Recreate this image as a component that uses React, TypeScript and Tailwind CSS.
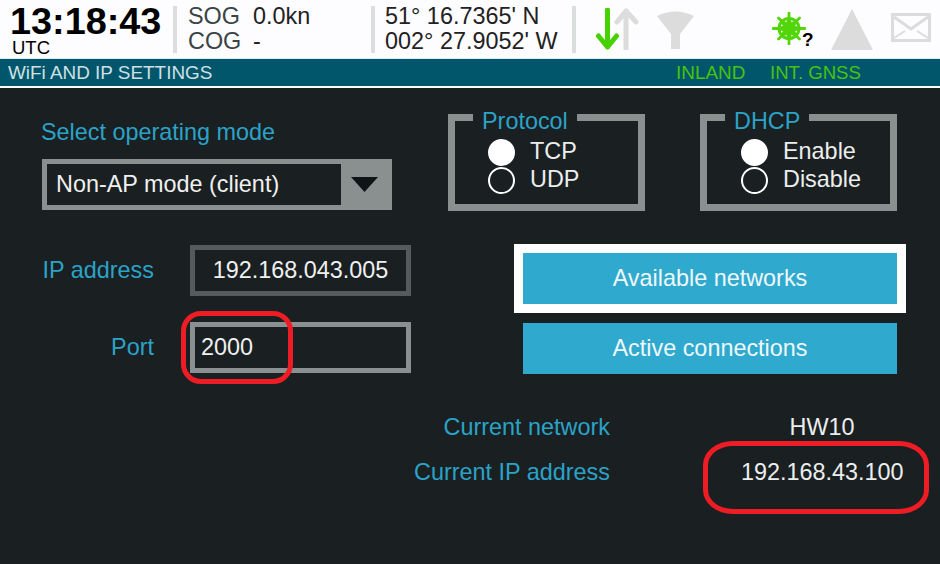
import React from 'react';

const Divider = () => <div className="h-[47px] w-[4px] shrink-0 bg-[#dcdedd]" />;

const ShipWheel = () => (
  <svg width="34" height="33" viewBox="0 0 34 33" fill="none" stroke="#52d60a" strokeLinecap="round">
    <circle cx="17" cy="16.5" r="10" strokeWidth="3" />
    <path d="M17 1v31M1 16.5h32M6.5 6l21 21M27.5 6l-21 21" strokeWidth="2.8" />
    <path d="M17 10v13M10.5 16.5h13M12.5 12l9 9M21.5 12l-9 9" strokeWidth="5" />
  </svg>
);

const StatusIcons = () => (
  <div className="flex items-start self-start">
    <svg width="43" height="42" viewBox="0 0 43 42" fill="none" strokeLinecap="round" strokeLinejoin="round" className="mt-[8px] ml-[20px]">
      <path d="M30 42V3M21 14L30 3L40 14" stroke="#dcdcdc" strokeWidth="5" />
      <path d="M11.5 2v37M2.5 28l9 11l9-11" stroke="#46d200" strokeWidth="5" />
    </svg>
    <svg width="37" height="39" viewBox="0 0 37 39" className="mt-[10px] ml-[18px]">
      <path d="M0 6Q18.5 -3 37 6L23 24V39H14V24Z" fill="#dcdcdc" />
    </svg>
    <div className="relative mt-[12px] ml-[78px] h-[33px] w-[34px]">
      <ShipWheel />
      <span className="absolute left-[30px] top-[18px] text-[19px] leading-[19px] font-bold text-black">?</span>
    </div>
    <svg width="42" height="41" viewBox="0 0 42 41" className="mt-[9px] ml-[25px]">
      <path d="M21 0L42 41H0Z" fill="#dcdcdc" />
    </svg>
    <svg width="40" height="29" viewBox="0 0 40 29" fill="none" stroke="#dcdcdc" className="mt-[13px] ml-[18px]">
      <rect x="1.5" y="1.5" width="37" height="26" strokeWidth="3" />
      <path d="M3 4L20 16L37 4" strokeWidth="3" />
      <path d="M3 25L14 18M37 25L26 18" strokeWidth="2" />
    </svg>
  </div>
);

const Header = () => (
  <div className="flex h-[58px] items-center bg-[#fdfcfe] text-[#3b4444]">
    <div className="w-[173px] shrink-0 pl-[10px] text-black">
      <div className="text-[37.8px] leading-[36px] font-bold">13:18:43</div>
      <div className="ml-[2px] text-[18.5px] leading-[17px]">UTC</div>
    </div>
    <Divider />
    <div className="ml-[11px] grid w-[183px] shrink-0 grid-cols-[65px_1fr] text-[23.4px] leading-[25px]">
      <span>SOG</span>
      <span className="text-[#222]">0.0kn</span>
      <span>COG</span>
      <span className="text-[#222]">-</span>
    </div>
    <Divider />
    <div className="ml-[10px] w-[187px] shrink-0 text-[23.4px] leading-[25px] text-[#222]">
      <div>51° 16.7365' N</div>
      <div>002° 27.9052' W</div>
    </div>
    <Divider />
    <StatusIcons />
  </div>
);

const TitleBar = () => (
  <div className="flex h-[27px] items-center bg-[#02566b] pt-[1px] pl-[8px] text-[18.9px] text-[#cfe0e4]">
    <span className="w-[668px]">WiFi AND IP SETTINGS</span>
    <span className="w-[94px] text-[#47c40a]">INLAND</span>
    <span className="text-[18.6px] text-[#47c40a]">INT. GNSS</span>
  </div>
);

const Radio = ({ label, on }: { label: string; on?: boolean }) => (
  <div className="flex h-[28px] items-center gap-[15px] text-[#eceeee]">
    <span className={`h-[27px] w-[27px] rounded-full border-2 border-white ${on ? 'bg-white' : 'bg-transparent'}`} />
    <span>{label}</span>
  </div>
);

const RadioGroup = ({ title, options, indent }: { title: string; options: string[]; indent: string }) => (
  <fieldset className="h-[109px] w-[197px] border-[7px] border-[#8a8f90]">
    <legend className="ml-[18px] px-[9px] pt-[7px] text-[23.4px] leading-[24px] text-[#2ba3c8]">{title}</legend>
    <div className={`mt-[5px] ${indent}`}>
      {options.map((o, i) => (
        <Radio key={o} label={o} on={i === 0} />
      ))}
    </div>
  </fieldset>
);

const Field = ({ label, value, dim, center }: { label: string; value: string; dim?: boolean; center?: boolean }) => (
  <div className="flex items-center">
    <span className="w-[112px] text-right text-[#2ba3c8]">{label}</span>
    <div
      className={`ml-[36px] flex h-[51px] w-[221px] items-center border-[5px] pt-[1px] ${dim ? 'border-[#545b5c]' : 'border-[#8a8f90]'} ${center ? 'justify-center' : 'pl-[6px]'} text-[#f0f0f0]`}
    >
      {value}
    </div>
  </div>
);

const NetButton = ({ label }: { label: string }) => (
  <div className="flex h-[51px] w-[374px] items-center justify-center bg-[#30a9ce] pt-[1px] text-[#eef8fb]">{label}</div>
);

export default function App() {
  return (
    <div className="relative h-[564px] w-[940px] overflow-hidden bg-[#1a1f21] font-['Liberation_Sans',sans-serif] text-[23.4px]">
      <Header />
      <div className="h-[1px] bg-[#dfe8ea]" />
      <TitleBar />
      <div className="h-[2px] bg-white" />

      <div className="flex pt-[17px] pl-[42px]">
        <div className="w-[369px]">
          <div className="mt-[14px] -ml-[1px] leading-[26px] text-[#2ba3c8]">Select operating mode</div>
          <div className="mt-[14px] flex h-[51px] w-[350px] border-[5px] border-[#8a8f90] text-[#f0f0f0]">
            <span className="flex flex-1 items-center pt-[1px] pl-[9px]">Non-AP mode (client)</span>
            <span className="flex w-[46px] items-center justify-center bg-[#8a8f90]">
              <svg width="27" height="15" viewBox="0 0 27 15">
                <path d="M0 0H27L13.5 15Z" fill="#0f1516" />
              </svg>
            </span>
          </div>
          <div className="mt-[35px]">
            <Field label="IP address" value="192.168.043.005" dim center />
          </div>
          <div className="mt-[26px]">
            <Field label="Port" value="2000" />
          </div>
        </div>

        <div className="-mt-[3px] ml-[37px] w-[449px]">
          <div className="flex justify-between">
            <RadioGroup title="Protocol" options={['TCP', 'UDP']} indent="pl-[33px]" />
            <RadioGroup title="DHCP" options={['Enable', 'Disable']} indent="pl-[34px]" />
          </div>
          <div className="mt-[42px] ml-[75px] flex flex-col gap-[19px]">
            <div className="outline-[9px] outline-white">
              <NetButton label="Available networks" />
            </div>
            <NetButton label="Active connections" />
          </div>
        </div>
      </div>

      <div className="mt-[40px] ml-[42px] grid grid-cols-[568px_162px] gap-x-[131px] gap-y-[19px] leading-[26px]">
        <span className="text-right text-[#2ba3c8]">Current network</span>
        <span className="text-center text-[#eceeee]">HW10</span>
        <span className="text-right text-[#2ba3c8]">Current IP address</span>
        <span className="text-center text-[#eceeee]">192.168.43.100</span>
      </div>

      {/* red marks drawn over the screenshot */}
      <div className="absolute left-[181px] top-[311px] h-[73px] w-[112px] rounded-[20px] border-[5px] border-[#ee1c25]" />
      <div className="absolute left-[703px] top-[441px] h-[73px] w-[226px] rounded-[30px/24px] border-[5px] border-[#ee1c25]" />
    </div>
  );
}
